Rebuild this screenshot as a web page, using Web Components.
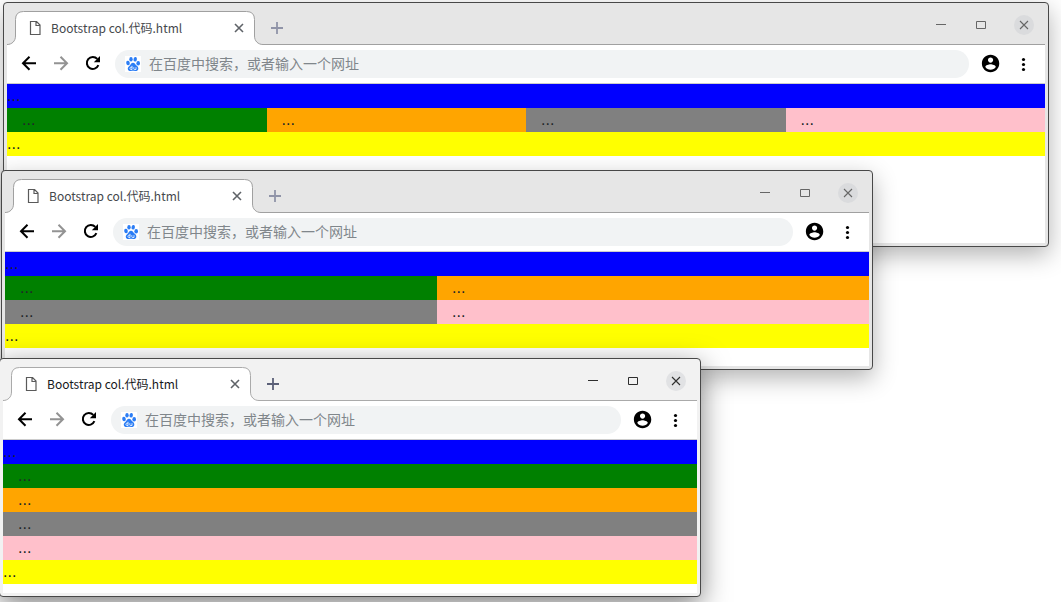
<!DOCTYPE html>
<html lang="zh-CN">
<head>
<meta charset="utf-8">
<meta name="viewport" content="width=device-width, initial-scale=1">
<title>Bootstrap col</title>
<style>
  html, body { margin: 0; height: 100%; background: #fff; }
  body { overflow: hidden; font-family: "Noto Sans CJK SC", "Noto Sans", sans-serif; }
</style>
</head>
<body>
<desk-top>
  <browser-window class="wide"><grid-demo></grid-demo></browser-window>
  <browser-window class="medium"><grid-demo></grid-demo></browser-window>
  <browser-window class="narrow" active><grid-demo></grid-demo></browser-window>
</desk-top>

<script>
const define = (name, html) => {
  const template = document.createElement('template');
  template.innerHTML = html;
  customElements.define(name, class extends HTMLElement {
    constructor() {
      super();
      this.attachShadow({ mode: 'open' }).append(template.content.cloneNode(true));
    }
  });
};

/* The desktop: places each window freely, later ones on top. */
define('desk-top', `
<style>
  :host { display: block; position: relative; height: 100%; overflow: hidden; }
  ::slotted(*) { position: absolute; }
  ::slotted(.wide) { left: 3px; right: 12px; top: 2px; --page-height: 159px; }
  ::slotted(.medium) { left: 1px; right: 188px; top: 170px; --page-height: 114px; }
  ::slotted(.narrow) { left: -1px; right: 360px; top: 358px; --page-height: 153px; }
</style>
<slot></slot>`);

define('tab-strip', `
<style>
  :host { display: flex; align-items: flex-start; padding-top: 8px; box-shadow: inset 0 -1px var(--line); }
  button { display: grid; place-items: center; border: 0; padding: 0; background: none; color: inherit; }
  svg { display: block; }
  .tab { display: grid; width: 256px; height: 34px; }
  .tab > * { grid-area: 1 / 1; }
  .label { display: flex; align-items: center; padding: 0 18px 0 22px; font-size: 12px; line-height: 20px; color: var(--tab-ink); }
  .label span { flex: 1; padding-left: 10px; white-space: nowrap; }
  .label button { width: 12px; height: 12px; color: #5f6368; }
  .add { width: 28px; height: 34px; color: var(--plus); }
  .controls { display: flex; align-items: center; gap: 20px; margin-left: auto; padding-right: 11px; height: 28px; color: var(--ink); }
  .controls button { width: 20px; height: 20px; }
  .controls .close { margin-left: 3px; border-radius: 50%; background: var(--knob); }
</style>
<div class="tab">
  <svg width="256" height="34" viewBox="0 0 256 34">
    <path d="M0 34V33.5C5 33.5 8.500 30 8.500 25V8.500Q8.500 .5 16.500 .5H239.500Q247.500 .5 247.500 8.500V25C247.500 30 251 33.500 256 33.500V34Z" fill="#fff"/>
    <path d="M0 33.500C5 33.500 8.500 30 8.500 25V8.500Q8.500 .5 16.500 .5H239.500Q247.500 .5 247.500 8.500V25C247.500 30 251 33.500 256 33.500" fill="none" stroke="var(--line)"/>
  </svg>
  <div class="label">
    <svg width="12" height="14" viewBox="0 0 12 14"><path d="M1.500 .5H7.500L11 4V13.500H1.500ZM7 .5V4.500H11" fill="none" stroke="#5a5a5a" stroke-width="1.200"/></svg>
    <span>Bootstrap col.代码.html</span>
    <button aria-label="关闭标签页"><svg width="10" height="10" viewBox="0 0 10 10"><path d="M1 1L9 9M9 1L1 9" stroke="currentColor" stroke-width="1.600"/></svg></button>
  </div>
</div>
<button class="add" aria-label="新标签页"><svg width="12" height="12" viewBox="0 0 12 12"><path d="M6 0V12M0 6H12" stroke="currentColor" stroke-width="1.800"/></svg></button>
<div class="controls">
  <button aria-label="最小化"><svg width="10" height="10" viewBox="0 0 10 10"><path d="M0 4.500H10" stroke="currentColor"/></svg></button>
  <button aria-label="最大化"><svg width="10" height="8" viewBox="0 0 10 8"><path d="M.5 .5H9.500V7.500H.5Z" fill="none" stroke="currentColor"/></svg></button>
  <button class="close" aria-label="关闭"><svg width="10" height="10" viewBox="0 0 10 10"><path d="M1 1L9 9M9 1L1 9" stroke="currentColor" stroke-width="1.100"/></svg></button>
</div>`);

define('address-bar', `
<style>
  :host { display: flex; align-items: center; gap: 12px; padding: 0 12px; height: 38px; background: #fff; border-bottom: 1px solid #ccc; color: #000; }
  button { display: grid; place-items: center; width: 20px; height: 20px; border: 0; padding: 0; background: none; color: inherit; }
  .forward { color: #939393; }
  svg { display: block; flex: none; }
  label { flex: 1; display: flex; align-items: center; gap: 8px; min-width: 0; height: 28px; padding: 0 10px; border-radius: 14px; background: #f1f3f4; }
  input { flex: 1; min-width: 0; border: 0; padding: 0 0 2px; outline: 0; background: none; font: 14px/20px "Noto Sans CJK SC", sans-serif; }
  input::placeholder { color: #80868b; opacity: 1; }
</style>
<button aria-label="后退"><svg width="20" height="20" viewBox="0 0 20 20"><path d="M17 9.200H4.500M10.500 2.700L4 9.200L10.500 15.700" fill="none" stroke="currentColor" stroke-width="2"/></svg></button>
<button class="forward" aria-label="前进"><svg width="20" height="20" viewBox="0 0 20 20"><path d="M3 9.200H15.500M9.500 2.700L16 9.200L9.500 15.700" fill="none" stroke="currentColor" stroke-width="2"/></svg></button>
<button aria-label="重新加载"><svg width="20" height="20" viewBox="0 0 20 20"><path d="M15.400 11.200A6 6 0 1 1 14.300 4.900" fill="none" stroke="currentColor" stroke-width="2"/><path d="M17 2V8.200H10.800Z" fill="currentColor"/></svg></button>
<label>
  <svg width="16" height="16" viewBox="0 0 16 16">
    <path fill="#fff" d="M0 0H16V16H0Z"/>
    <g fill="#2b7df5">
      <ellipse cx="3" cy="7" rx="1.800" ry="2.200" transform="rotate(-12 3 7)"/>
      <ellipse cx="6" cy="3.200" rx="1.700" ry="2.300"/>
      <ellipse cx="10.200" cy="3.300" rx="1.700" ry="2.300" transform="rotate(12 10.200 3.300)"/>
      <ellipse cx="13.200" cy="7.300" rx="1.800" ry="2.200"/>
      <path d="M8 6.800C9.800 6.800 10.300 8.500 11.500 9.600C12.800 10.800 13.500 11.500 13.300 13C13 14.800 11.500 15.200 10 15C8.700 14.800 7.300 14.800 6 15C4.300 15.200 3 14.500 2.800 13C2.600 11.500 3.500 10.700 4.600 9.700C5.800 8.600 6.200 6.800 8 6.800Z"/>
    </g>
    <path d="M7 9.800V13.500H5.800A1.200 1.200 0 0 1 5.800 11.200H7M8.800 11.200V12.700Q8.800 13.500 9.600 13.500H11V11.200" fill="none" stroke="#fff" stroke-width=".8"/>
  </svg>
  <input type="text" aria-label="地址和搜索栏" placeholder="在百度中搜索，或者输入一个网址">
</label>
<button aria-label="用户"><svg width="20" height="20" viewBox="1 1 23 23"><path fill="currentColor" d="M12 2C6.480 2 2 6.480 2 12s4.480 10 10 10 10-4.480 10-10S17.520 2 12 2zm0 3c1.660 0 3 1.340 3 3s-1.340 3-3 3-3-1.340-3-3 1.340-3 3-3zm0 14.200c-2.500 0-4.710-1.280-6-3.220.03-1.990 4-3.080 6-3.080 1.990 0 5.970 1.090 6 3.080-1.290 1.940-3.500 3.220-6 3.220z"/></svg></button>
<button aria-label="菜单"><svg width="20" height="20" viewBox="0 0 20 20" fill="currentColor"><circle cx="10.500" cy="5.500" r="1.600"/><circle cx="10.500" cy="10.500" r="1.600"/><circle cx="10.500" cy="15.500" r="1.600"/></svg></button>`);

define('browser-window', `
<style>
  :host {
    --frame: #e6e6e6; --line: #a0a0a0; --ink: #666; --plus: #9094a8; --tab-ink: #45484c; --knob: #dadbdd;
    display: block; box-sizing: border-box; border: 1px solid #484848; border-radius: 4px;
    padding: 0 3px 3px; background: var(--frame); box-shadow: 0 8px 24px rgba(0, 0, 0, .3);
  }
  :host([active]) {
    --frame: #f2f2f2; --line: #aaa; --ink: #2e2e2e; --plus: #5b6078; --tab-ink: #16181b; --knob: #e1e2e4;
    box-shadow: 0 8px 28px rgba(0, 0, 0, .5);
  }
  main { min-height: var(--page-height); background: #fff; }
</style>
<tab-strip></tab-strip>
<address-bar></address-bar>
<main><slot></slot></main>`);

/* Four columns that fold to two and then one as the page narrows. */
define('grid-demo', `
<style>
  :host { display: block; container-type: inline-size; font: 16px/24px "Liberation Sans", sans-serif; color: #212529; }
  .row { display: grid; grid-template-columns: 1fr; }
  .row > div { padding: 0 15px; }
  @container (min-width: 768px) { .row { grid-template-columns: 1fr 1fr; } }
  @container (min-width: 992px) { .row { grid-template-columns: repeat(4, 1fr); } }
  .blue { background: blue; }
  .green { background: green; }
  .orange { background: orange; }
  .gray { background: gray; }
  .pink { background: pink; }
  .yellow { background: yellow; }
</style>
<div class="blue">...</div>
<div class="row">
  <div class="green">...</div>
  <div class="orange">...</div>
  <div class="gray">...</div>
  <div class="pink">...</div>
</div>
<div class="yellow">...</div>`);
</script>
</body>
</html>
